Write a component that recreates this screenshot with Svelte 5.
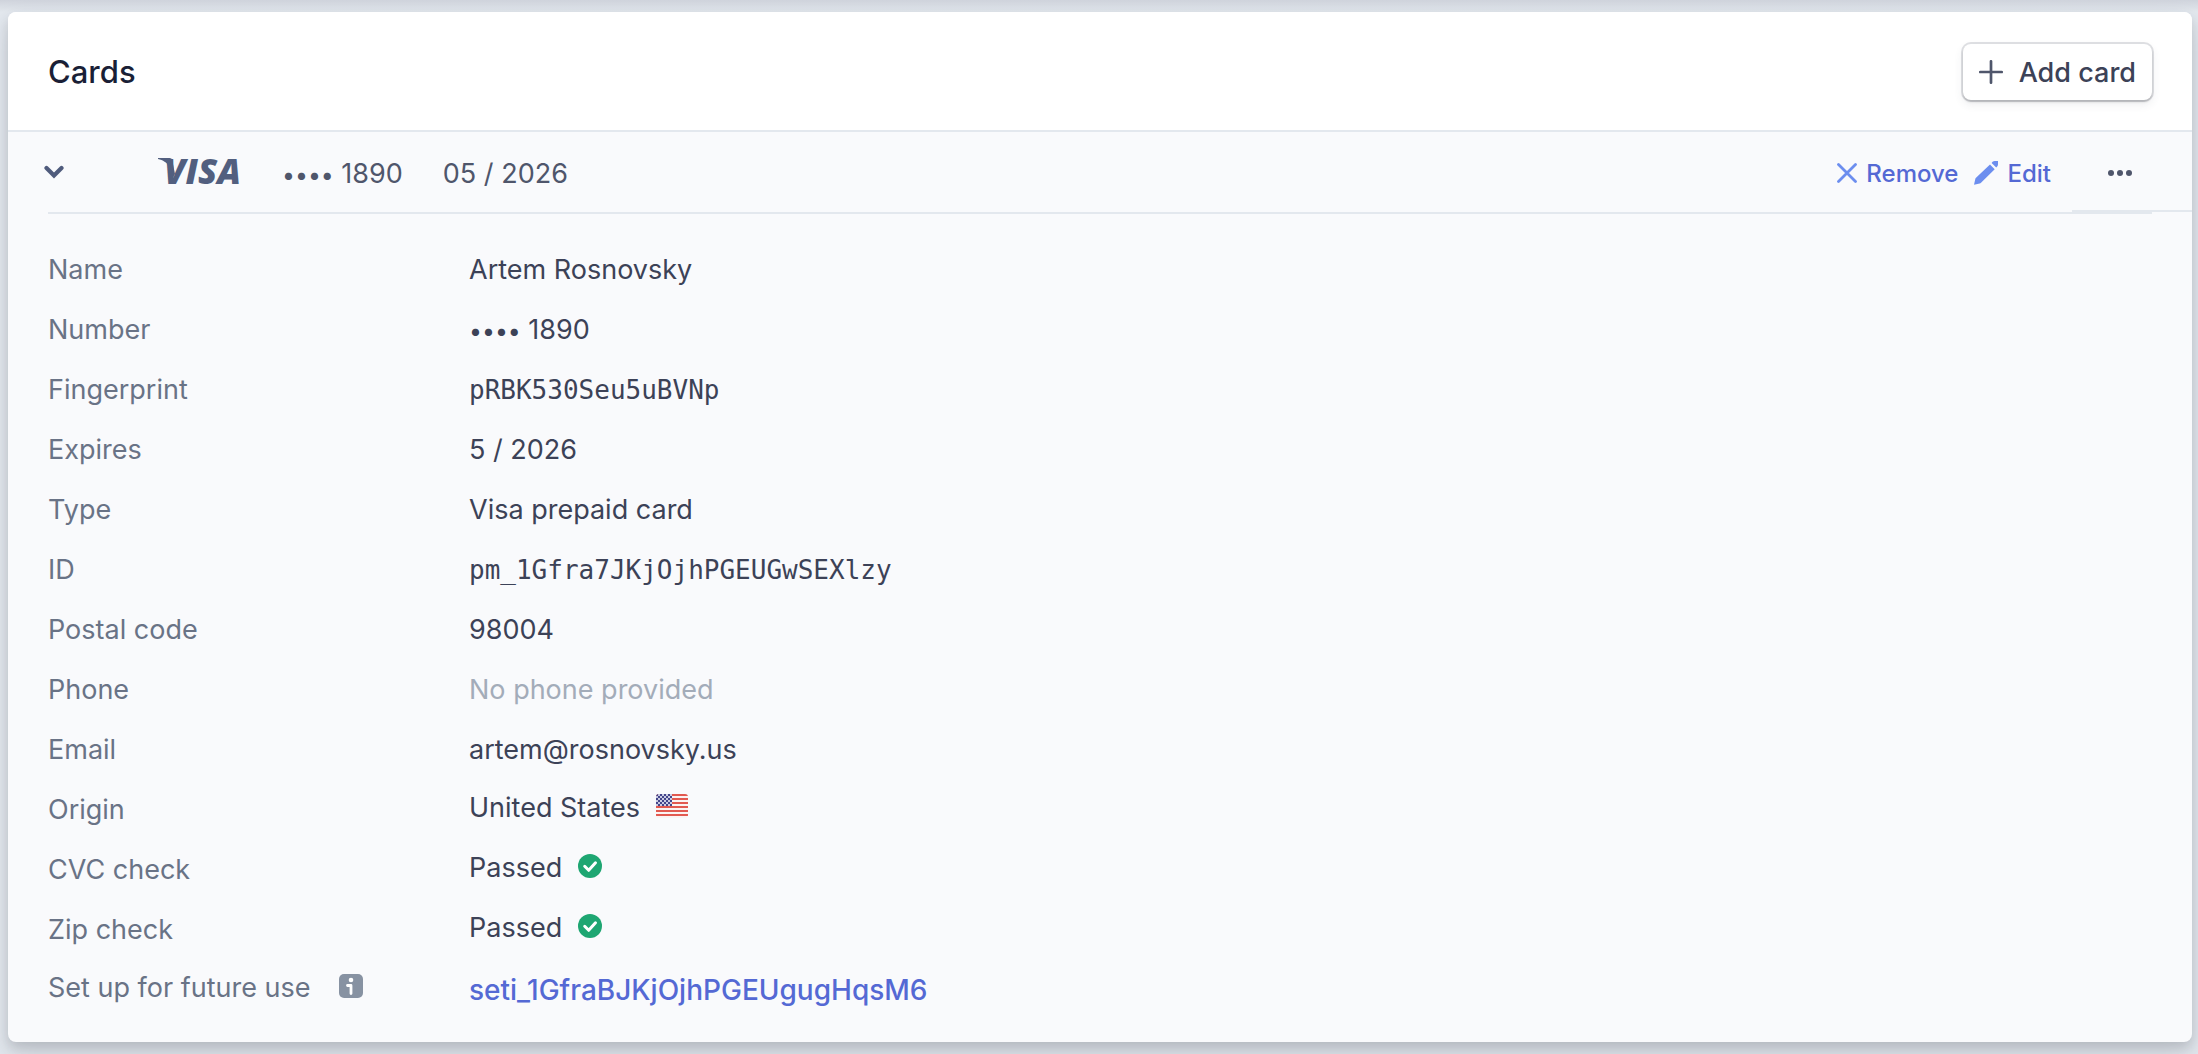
<script>
  const details = [
    { label: 'Name', value: 'Artem Rosnovsky' },
    { label: 'Number', value: '1890', kind: 'masked' },
    { label: 'Fingerprint', value: 'pRBK530Seu5uBVNp', kind: 'mono' },
    { label: 'Expires', value: '5 / 2026' },
    { label: 'Type', value: 'Visa prepaid card' },
    { label: 'ID', value: 'pm_1Gfra7JKjOjhPGEUGwSEXlzy', kind: 'mono' },
    { label: 'Postal code', value: '98004' },
    { label: 'Phone', value: 'No phone provided', kind: 'empty' },
    { label: 'Email', value: 'artem@rosnovsky.us' },
    { label: 'Origin', value: 'United States', kind: 'flag' },
    { label: 'CVC check', value: 'Passed', kind: 'check' },
    { label: 'Zip check', value: 'Passed', kind: 'check' },
    { label: 'Set up for future use', value: 'seti_1GfraBJKjOjhPGEUgugHqsM6', kind: 'link', info: true }
  ];
  const stripes = [0, 4, 8, 12, 16, 20];
  const starRows = [0, 1, 2, 3, 4, 5];
  const starCols = [0, 1, 2, 3];
  let open = $state(true);
</script>

{#snippet masked(digits)}
  <span><span class="dots">••••</span> {digits}</span>
{/snippet}

<main>
  <section class="card">
    <header>
      <h2>Cards</h2>
      <button class="add" type="button">
        <svg width="24" height="24" viewBox="0 0 24 24" aria-hidden="true">
          <path d="M12 1.300v21.400M1.300 12h21.400" fill="none" stroke="#4f566b" stroke-width="2.700" stroke-linecap="round" />
        </svg>
        Add card
      </button>
    </header>

    <div class="summary">
      <button class="toggle" type="button" aria-label="Toggle card details" aria-expanded={open} onclick={() => (open = !open)}>
        <svg width="20" height="14" viewBox="0 0 20 14" aria-hidden="true">
          <path d="M2.500 3l7.500 7.500L17.500 3" fill="none" stroke="#4f5b7c" stroke-width="4.200" stroke-linecap="round" />
        </svg>
      </button>
      <svg class="visa" width="84" height="40" viewBox="0 -6 84 40" role="img" aria-label="Visa">
        <path d="M0 0h11.500c1.600 0 2.400.8 2.700 2.200L17 16l-2 3L10.500 8C9 4.500 5 2.200 0 1z" fill="#525f7f" />
        <text x="6" y="26" fill="#525f7f">VISA</text>
      </svg>
      <span class="number">{@render masked('1890')}</span>
      <span class="expiry">05 / 2026</span>
      <div class="actions">
        <button class="action" type="button">
          <svg width="20" height="20" viewBox="0 0 20 20" aria-hidden="true">
            <path d="M1.500 1.500l17 17M18.500 1.500l-17 17" fill="none" stroke="#6c8eef" stroke-width="2.800" stroke-linecap="round" />
          </svg>
          Remove
        </button>
        <button class="action" type="button">
          <svg width="24" height="24" viewBox="0 0 24 24" aria-hidden="true">
            <path d="M16 3.500l4.700 4.700L7 21.700c-.4.400-.8.600-1.300.700L0 23.800l1.300-5.700c.1-.5.300-.9.700-1.300zM17.600 1.900l1-1.100c.6-.6 1.300-.8 2.200-.8H24v3.200c0 .9-.2 1.600-.8 2.200l-1 1.100z" fill="#6c8eef" />
          </svg>
          Edit
        </button>
      </div>
      <button class="more" type="button" aria-label="More actions">
        <svg width="24" height="6" viewBox="0 0 24 6" aria-hidden="true">
          <g fill="#4f566b"><circle cx="3" cy="3" r="3" /><circle cx="12" cy="3" r="3" /><circle cx="21" cy="3" r="3" /></g>
        </svg>
      </button>
    </div>

    {#if open}
      <dl>
        {#each details as row}
          <div class="row">
            <dt class:with-icon={row.info}>
              {row.label}
              {#if row.info}
                <svg width="24" height="24" viewBox="0 0 24 24" role="img" aria-label="Information">
                  <rect width="24" height="24" rx="5" fill="#8792a2" />
                  <circle cx="12" cy="6" r="2.300" fill="#fff" />
                  <path d="M8.500 11.500H12V19.500" fill="none" stroke="#fff" stroke-width="2.800" stroke-linejoin="round" stroke-linecap="round" />
                </svg>
              {/if}
            </dt>
            <dd class:mono={row.kind === 'mono'} class:empty={row.kind === 'empty'} class:with-icon={row.kind === 'flag' || row.kind === 'check'}>
              {#if row.kind === 'link'}
                <a href="#setup-intent">{row.value}</a>
              {:else if row.kind === 'masked'}
                {@render masked(row.value)}
              {:else}
                {row.value}
              {/if}
              {#if row.kind === 'flag'}
                <svg width="32" height="24" viewBox="0 0 32 24" aria-hidden="true">
                  <clipPath id="flag-shape"><rect width="32" height="24" rx="3" /></clipPath>
                  <g clip-path="url(#flag-shape)">
                    <rect width="32" height="24" fill="#fbf3f2" />
                    {#each stripes as y}
                      <rect {y} width="32" height="2" fill="#e25950" />
                    {/each}
                    <rect width="16" height="12" fill="#43458b" />
                    {#each starRows as r}
                      {#each starCols as c}
                        <rect x={c * 4 + (r % 2 ? 0 : 2)} y={r * 2} width="2" height="2" fill="#c9cbe2" />
                      {/each}
                    {/each}
                  </g>
                </svg>
              {:else if row.kind === 'check'}
                <svg width="24" height="24" viewBox="0 0 24 24" aria-hidden="true">
                  <circle cx="12" cy="12" r="12" fill="#1ea672" />
                  <path d="M6.700 12.300l4 4 6.800-7.500" fill="none" stroke="#fff" stroke-width="3" stroke-linecap="round" stroke-linejoin="round" />
                </svg>
              {/if}
            </dd>
          </div>
        {/each}
      </dl>
    {/if}
  </section>
</main>

<style>
  :global(body) {
    background: #e3e8ee;
    font-family: Inter, "Liberation Sans", sans-serif;
  }
  main {
    padding: 12px 6px 12px 8px;
    background: linear-gradient(#cfd3dc, rgba(207, 211, 220, 0) 12px);
    overflow: hidden;
  }
  button {
    border: 0;
    padding: 0;
    background: none;
    font: inherit;
    color: inherit;
    display: flex;
    align-items: center;
    cursor: pointer;
  }
  .card {
    background: #f9fafc;
    border-radius: 8px;
    box-shadow: 0 14px 28px rgba(60, 66, 87, 0.14), 0 6px 12px rgba(0, 0, 0, 0.12);
  }
  header {
    display: flex;
    align-items: center;
    justify-content: space-between;
    padding: 32px 40px 30px;
    background: #fff;
    border-bottom: 2px solid #e3e8ee;
    border-radius: 8px 8px 0 0;
  }
  h2 {
    margin: 0;
    font-size: 31px;
    line-height: 40px;
    font-weight: 500;
    color: #1a1f36;
  }
  .add {
    gap: 16px;
    padding: 0 16px;
    height: 56px;
    border-radius: 8px;
    font-size: 27px;
    font-weight: 500;
    color: #3c4257;
    background: #fff;
    box-shadow: 0 0 0 2px rgba(60, 66, 87, 0.16), 0 2px 2px rgba(0, 0, 0, 0.16), 0 4px 10px rgba(60, 66, 87, 0.1);
  }
  .summary {
    display: flex;
    align-items: center;
    height: 80px;
    position: relative;
    padding-left: 36px;
    font-size: 27px;
    color: #4f566b;
  }
  .summary::after {
    content: "";
    position: absolute;
    left: 40px;
    right: 40px;
    top: 80px;
    height: 2px;
    background: #e3e8ee;
  }
  .visa {
    margin-left: 94px;
    overflow: visible;
  }
  .visa text {
    font: italic 800 35px "Open Sans", sans-serif;
  }
  .dots {
    font-size: 23px;
  }
  .number,
  .expiry,
  .actions {
    padding-top: 2px;
  }
  .number,
  .expiry {
    margin-left: 40px;
  }
  .actions {
    display: flex;
    gap: 16px;
    margin-left: auto;
    font-size: 24px;
    font-weight: 500;
    color: #5469d4;
  }
  .action {
    gap: 9px;
  }
  .more {
    justify-content: center;
    box-sizing: border-box;
    width: 120px;
    height: 80px;
    padding: 4px 24px 0 0;
    margin-left: 21px;
    border-bottom: 2px solid #e3e8ee;
  }
  dl {
    margin: 0;
    padding: 28px 40px 22px;
    font-size: 27px;
    line-height: 32px;
  }
  .row {
    display: grid;
    grid-template-columns: 421px 1fr;
    height: 60px;
  }
  dt,
  dd {
    display: flex;
    align-items: center;
    gap: 16px;
    margin: 0;
    white-space: nowrap;
  }
  dt {
    gap: 28px;
    color: #697386;
  }
  dd {
    color: #3c4257;
  }
  .with-icon {
    padding-bottom: 4px;
  }
  .with-icon svg {
    margin-bottom: 4px;
  }
  .mono {
    font-family: "DejaVu Sans Mono", monospace;
    font-size: 26px;
  }
  .empty {
    color: #a3acb9;
  }
  a {
    font-size: 28px;
    font-weight: 500;
    color: #5469d4;
    text-decoration: none;
  }
</style>
